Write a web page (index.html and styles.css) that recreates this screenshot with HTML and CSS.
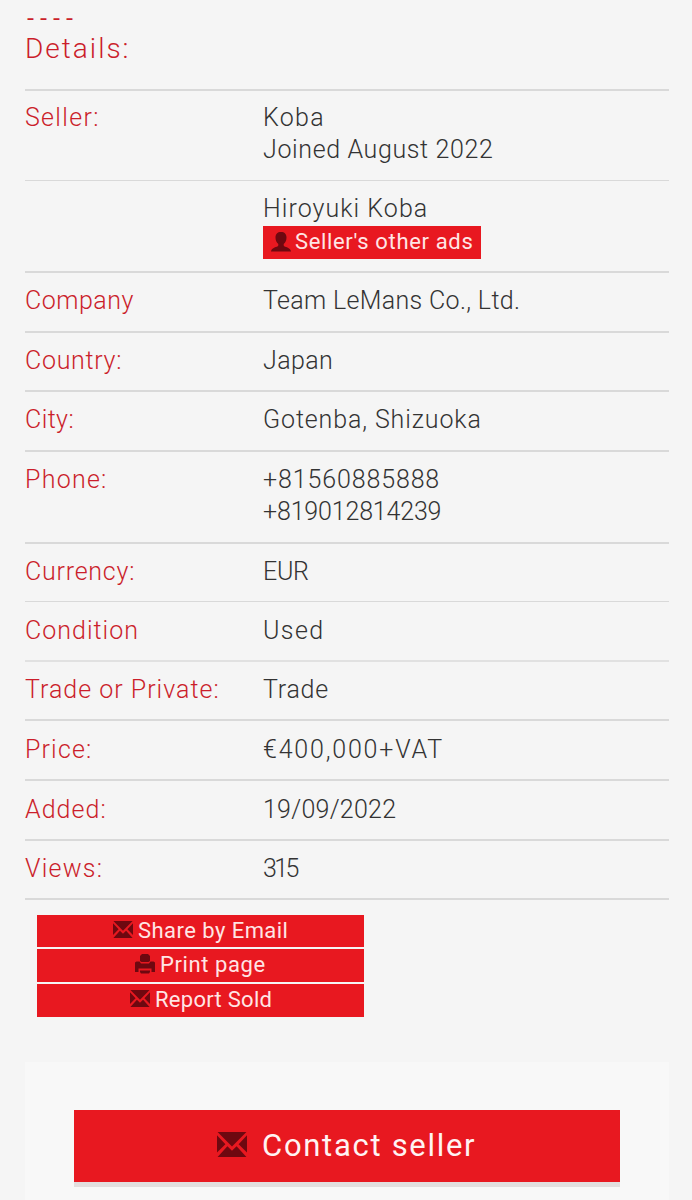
FILE: index.html
```html
<!DOCTYPE html>
<html lang="en">
<head>
<meta charset="utf-8">
<title>Details</title>
<link rel="stylesheet" href="styles.css">
</head>
<body>
<svg class="defs" width="0" height="0" aria-hidden="true">
  <symbol id="mail" viewBox="0 0 30 25" preserveAspectRatio="none">
    <path d="M0.6 0H29.4L15 14.5ZM0 3.2L8.4 12.3L0 20.6ZM30 3.2V20.6L21.6 12.3ZM10.4 14.2L15 18.7L19.6 14.2L29.4 25H0.6Z"/>
  </symbol>
  <symbol id="print" viewBox="0 0 20 20">
    <path d="M7 0H13L15 2V7L13.500 8H6.500L5 7V2ZM0 8.500L1.500 7.500H4.500L6 9.500H14L15.500 7.500H18.500L20 8.500V18H16.500V14.500H3.500V18H0ZM5 16.500H15V18L14 19.500H6L5 18Z"/>
  </symbol>
  <symbol id="user" viewBox="0 0 20 20">
    <path d="M10 0C13.500 0 15.500 2 15.500 5.500C15.500 8.500 14.500 10.500 12.700 12V13.500C13.500 15.500 19.500 15 20 19.500H0C0.500 15 6.500 15.500 7.300 13.500V12C5.500 10.500 4.500 8.500 4.500 5.500C4.500 2 6.500 0 10 0Z"/>
  </symbol>
</svg>
<main class="page">
  <div class="dashes">----</div>
  <h1 class="title">Details:</h1>
  <dl class="details">
    <div class="row row-seller"><dt class="k-seller">Seller:</dt><dd><div class="v-koba">Koba</div><div class="v-joined">Joined August 2022</div></dd></div>
    <div class="row row-name thin"><dt></dt><dd><div class="v-name">Hiroyuki Koba</div><a class="tag"><svg class="icon-user"><use href="#user"/></svg><span>Seller's other ads</span></a></dd></div>
    <div class="row h60"><dt class="k-company">Company</dt><dd class="v-team">Team LeMans Co., Ltd.</dd></div>
    <div class="row h59"><dt class="k-country">Country:</dt><dd class="v-japan">Japan</dd></div>
    <div class="row h60"><dt class="k-city">City:</dt><dd class="v-city">Gotenba, Shizuoka</dd></div>
    <div class="row row-phone"><dt class="k-phone">Phone:</dt><dd><div class="v-phone1">+81560885888</div><div class="v-phone2">+819012814239</div></dd></div>
    <div class="row h59"><dt class="k-currency">Currency:</dt><dd class="v-eur">EUR</dd></div>
    <div class="row h59 thin"><dt class="k-condition">Condition</dt><dd class="v-used">Used</dd></div>
    <div class="row h59 soft"><dt class="k-trade">Trade or Private:</dt><dd class="v-trade">Trade</dd></div>
    <div class="row h60 low"><dt class="k-price">Price:</dt><dd class="v-price">€400,000+VAT</dd></div>
    <div class="row h60 low"><dt class="k-added">Added:</dt><dd class="v-added">19/09/2022</dd></div>
    <div class="row h59"><dt class="k-views">Views:</dt><dd class="v-views">315</dd></div>
  </dl>
  <div class="actions">
    <a class="action share"><svg class="icon-mail"><use href="#mail"/></svg><span>Share by Email</span></a>
    <a class="action print"><svg class="icon-print"><use href="#print"/></svg><span>Print page</span></a>
    <a class="action report"><svg class="icon-mail"><use href="#mail"/></svg><span>Report Sold</span></a>
  </div>
  <section class="panel">
    <a class="contact"><svg class="icon-contact"><use href="#mail"/></svg><span>Contact seller</span></a>
  </section>
</main>
</body>
</html>
```

FILE: styles.css
```css
* { box-sizing: border-box; }
html { background: #f5f5f5; }
body { margin: 0; height: 1200px; overflow: hidden; background: #f5f5f5; color: #333;
  font: 300 25px/32px Roboto, "Open Sans", sans-serif; white-space: nowrap; }
svg { fill: #6e0810; flex: none; }
.defs { position: absolute; }
.page { padding: 3px 23px 0 25px; }
.dashes, .title, dt { color: #cb1e2b; }
.dashes { height: 29px; margin-left: -1px; font: 21.7px/33px "Liberation Mono", monospace; }
.title { margin: 0; height: 57px; font-size: 28px; font-weight: 300; line-height: 34px; letter-spacing: 2px; }
.details { margin: 0; border-bottom: 2px solid #d9d9d9; }
.row { display: grid; grid-template-columns: 238px 1fr; border-top: 2px solid #d9d9d9; padding-top: 12px; }
.thin { border-top-width: 1px; padding-top: 13px; }
.low { padding-top: 13px; }
.soft { border-top-color: #e1e1e1; }
dd { margin: 0; }
.row-seller, .row-name { height: 91px; }
.row-seller { padding-top: 11px; }
.row-name { padding-top: 12px; }
.row-phone { height: 92px; }
.h60 { height: 60px; }
.h59 { height: 59px; }

.k-seller { letter-spacing: 1.3px; }
.v-koba { letter-spacing: 1.3px; }
.v-joined { letter-spacing: .63px; }
.v-name { letter-spacing: 1.05px; }
.k-company { letter-spacing: .51px; }
.v-team { letter-spacing: .34px; }
.k-country { letter-spacing: .7px; }
.v-japan { letter-spacing: .4px; }
.k-city { letter-spacing: .4px; }
.v-city { letter-spacing: .88px; }
.k-phone { letter-spacing: 1.25px; }
.v-phone1 { letter-spacing: .87px; }
.v-phone2 { letter-spacing: -.17px; }
.k-currency { letter-spacing: .77px; }
.v-eur { letter-spacing: -.3px; }
.k-condition { letter-spacing: 1px; }
.v-used { letter-spacing: 1.4px; }
.k-trade { letter-spacing: 1px; }
.v-trade { letter-spacing: .75px; }
.k-price { letter-spacing: 1.15px; }
.v-price { letter-spacing: 1.8px; }
.k-added { letter-spacing: 1.05px; }
.v-added { letter-spacing: .25px; }
.k-views { letter-spacing: 1.25px; }
.v-views { letter-spacing: -2.6px; }

.tag, .action { background: #e81820; color: #ffe5e5; font-size: 22px; font-weight: 400; display: flex; }
.tag { width: 218px; height: 33px; margin-top: 1px; padding-left: 8px; gap: 4px; letter-spacing: .65px; }
.icon-user { width: 20px; height: 20px; margin-top: 6px; }
.actions { width: 327px; margin: 15px 0 0 12px; display: grid; gap: 2px; }
.action { height: 32px; line-height: 31px; gap: 5px; }
.action span { flex: none; }
.share { padding-left: 76px; letter-spacing: .45px; }
.print { padding-left: 98px; letter-spacing: .6px; height: 33px; line-height: 32px; }
.report { padding-left: 93px; letter-spacing: .28px; height: 33px; }
.icon-mail { width: 20px; height: 17px; margin-top: 6px; }
.icon-print { width: 20px; height: 20px; margin-top: 5px; }
.panel { margin: 45px 0 0; height: 139px; background: #f8f8f8; padding: 48px 49px 0; }
.contact { display: flex; height: 72px; padding-left: 143px; gap: 15px; background: #e81820; color: #fff3f3;
  box-shadow: 0 5px 0 #e2dede; font-size: 31px; font-weight: 400; line-height: 71px; letter-spacing: 1.7px; }
.icon-contact { width: 30px; height: 25px; margin-top: 22px; }
```
